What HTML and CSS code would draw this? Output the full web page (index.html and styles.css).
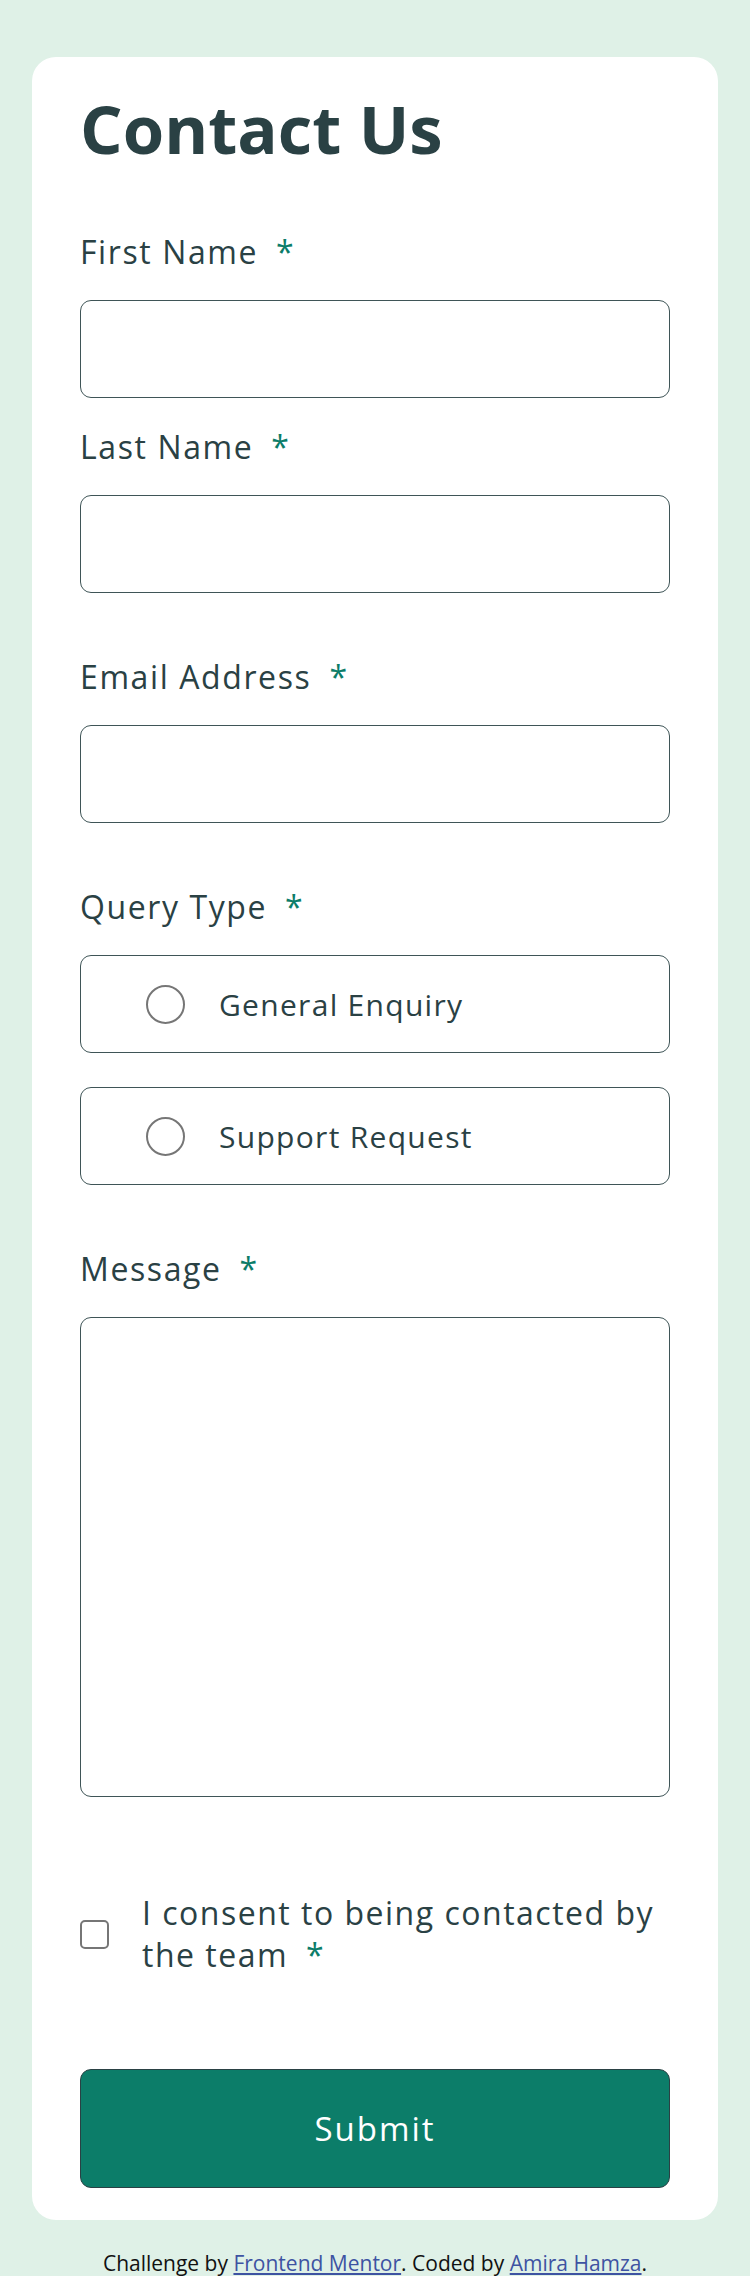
FILE: index.html
```html
<!DOCTYPE html>
<html lang="en">
<head>
<meta charset="utf-8">
<title>Contact Us</title>
<link rel="stylesheet" href="styles.css">
</head>
<body>
<main class="page">
  <form class="card">
    <h1 class="title">Contact Us</h1>

    <div class="field field-first">
      <label class="label">First Name<span class="req">*</span></label>
      <div class="input"></div>
    </div>

    <div class="field field-tight">
      <label class="label">Last Name<span class="req">*</span></label>
      <div class="input"></div>
    </div>

    <div class="field">
      <label class="label">Email Address<span class="req">*</span></label>
      <div class="input"></div>
    </div>

    <div class="field">
      <span class="label">Query Type<span class="req">*</span></span>
      <div class="options">
        <label class="option"><span class="radio"></span><span class="option-text">General Enquiry</span></label>
        <label class="option"><span class="radio"></span><span class="option-text">Support Request</span></label>
      </div>
    </div>

    <div class="field">
      <label class="label">Message<span class="req">*</span></label>
      <div class="textarea"></div>
    </div>

    <label class="consent">
      <span class="checkbox"></span>
      <span class="consent-text">I consent to being contacted by the&nbsp;team<span class="req">*</span></span>
    </label>

    <div class="submit">Submit</div>
  </form>

  <footer class="attribution">
    Challenge by <a href="#">Frontend Mentor</a>. Coded by <a href="#">Amira Hamza</a>.
  </footer>
</main>
</body>
</html>
```

FILE: styles.css
```css
* {
  box-sizing: border-box;
}

html, body {
  margin: 0;
  padding: 0;
}

body {
  background: #dff1e7;
  font-family: "Open Sans", "Noto Sans", sans-serif;
  color: #2a4144;
}

.page {
  padding: 57px 32px 0;
}

.card {
  background: #ffffff;
  border-radius: 24px;
  padding: 31px 48px 32px;
  display: flex;
  flex-direction: column;
}

.title {
  margin: 0;
  font-size: 67px;
  line-height: 80px;
  font-weight: 700;
  color: #2a4144;
}

.field {
  display: flex;
  flex-direction: column;
  margin-top: 64px;
}

.field-tight {
  margin-top: 29px;
}

.label {
  display: block;
  font-size: 32px;
  line-height: 40px;
  letter-spacing: 1.6px;
  margin-bottom: 28px;
}

.req {
  color: #0c7d69;
  margin-left: 18px;
}

.input {
  height: 98px;
  border: 1px solid #3f5557;
  border-radius: 11px;
  background: #fff;
}

.options {
  display: flex;
  flex-direction: column;
  gap: 34px;
}

.option {
  height: 98px;
  border: 1px solid #3f5557;
  border-radius: 11px;
  display: flex;
  align-items: center;
  padding-left: 65px;
}

.radio {
  width: 39px;
  height: 39px;
  border: 2px solid #767676;
  border-radius: 50%;
  flex: none;
}

.option-text {
  margin-left: 34px;
  font-size: 30px;
  letter-spacing: 1.3px;
}

.textarea {
  height: 480px;
  border: 1px solid #3f5557;
  border-radius: 11px;
}

.consent {
  display: flex;
  align-items: center;
  margin-top: 95px;
}

.checkbox {
  width: 29px;
  height: 29px;
  border: 2px solid #767676;
  border-radius: 5px;
  flex: none;
}

.consent-text {
  margin-left: 33px;
  font-size: 32px;
  line-height: 42px;
  letter-spacing: 1.5px;
}

.submit {
  margin-top: 93px;
  height: 119px;
  background: #0c7d69;
  border: 1px solid #2a4144;
  border-radius: 11px;
  color: #ffffff;
  font-size: 33px;
  letter-spacing: 2px;
  display: flex;
  align-items: center;
  justify-content: center;
}

.attribution {
  margin-top: 28px;
  text-align: center;
  font-size: 21px;
  line-height: 30px;
  color: #111;
}

.attribution a {
  color: #3e53a2;
}
```
